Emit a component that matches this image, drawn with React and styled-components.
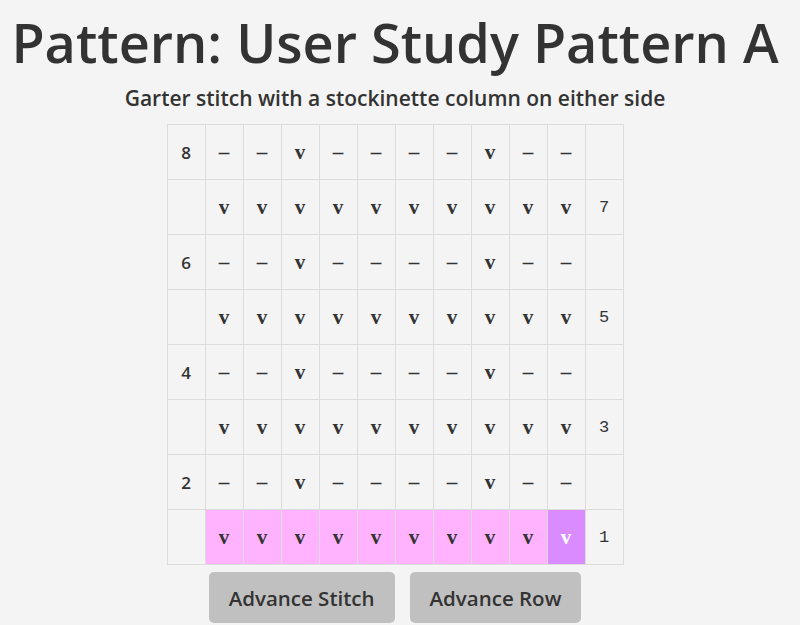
import React, { useState } from 'react';
import styled, { createGlobalStyle } from 'styled-components';

const GlobalStyle = createGlobalStyle`
  body {
    margin: 0;
    background-color: #f4f4f4;
    font-family: 'Open Sans', 'Liberation Sans', sans-serif;
    color: #333;
  }
`;

const Page = styled.div`
  display: flex;
  flex-direction: column;
  align-items: center;
  padding-right: 10px;
`;

const Title = styled.h1`
  margin: 8px 0 0;
  font-size: 54px;
  font-weight: 600;
  line-height: 68px;
  color: #333;
`;

const Subtitle = styled.h3`
  margin: 9px 0 13px;
  font-size: 21px;
  font-weight: 600;
  line-height: 26px;
`;

const Grid = styled.table`
  border-collapse: collapse;
  border: 1px solid #dcdcdc;
`;

const Cell = styled.td`
  width: 37px;
  height: 54px;
  padding: 0;
  border: 1px solid #dcdcdc;
  text-align: center;
  font-family: 'Liberation Serif', 'DejaVu Serif', serif;
  font-size: 21px;
  font-weight: 700;
  color: ${(p) => (p.$current ? '#fff' : '#333')};
  background-color: ${(p) =>
    p.$current ? '#da8bff' : p.$active ? '#ffb3ff' : 'transparent'};
`;

const LeftLabel = styled(Cell)`
  font-family: 'Open Sans', 'Liberation Sans', sans-serif;
  font-size: 17px;
  font-weight: 600;
`;

const RightLabel = styled(Cell)`
  font-family: 'Liberation Mono', 'DejaVu Sans Mono', monospace;
  font-weight: 400;
  font-size: 17px;
`;

const Buttons = styled.div`
  display: flex;
  gap: 15px;
  margin-top: 7px;
`;

const Button = styled.button`
  height: 51px;
  padding: 0 20px;
  border: none;
  border-radius: 5px;
  background-color: #c0c0c0;
  font-family: 'Open Sans', 'Liberation Sans', sans-serif;
  font-size: 20.5px;
  font-weight: 600;
  color: #333;
  cursor: pointer;
`;

const garter = ['–', '–', 'v', '–', '–', '–', '–', 'v', '–', '–'];
const stock = Array(10).fill('v');

const rows = [8, 7, 6, 5, 4, 3, 2, 1].map((n) => ({
  n,
  stitches: n % 2 === 0 ? garter : stock,
}));

const App = () => {
  const [row] = useState(1);
  const [stitch] = useState(9);

  return (
    <Page>
      <GlobalStyle />
      <Title>Pattern: User Study Pattern A</Title>
      <Subtitle>Garter stitch with a stockinette column on either side</Subtitle>
      <Grid>
        <tbody>
          {rows.map((r) => (
            <tr key={r.n}>
              <LeftLabel>{r.n % 2 === 0 ? r.n : ''}</LeftLabel>
              {r.stitches.map((s, i) => (
                <Cell
                  key={i}
                  $active={r.n === row}
                  $current={r.n === row && i === stitch}
                >
                  {s}
                </Cell>
              ))}
              <RightLabel>{r.n % 2 === 1 ? r.n : ''}</RightLabel>
            </tr>
          ))}
        </tbody>
      </Grid>
      <Buttons>
        <Button>Advance Stitch</Button>
        <Button>Advance Row</Button>
      </Buttons>
    </Page>
  );
};

export default App;
